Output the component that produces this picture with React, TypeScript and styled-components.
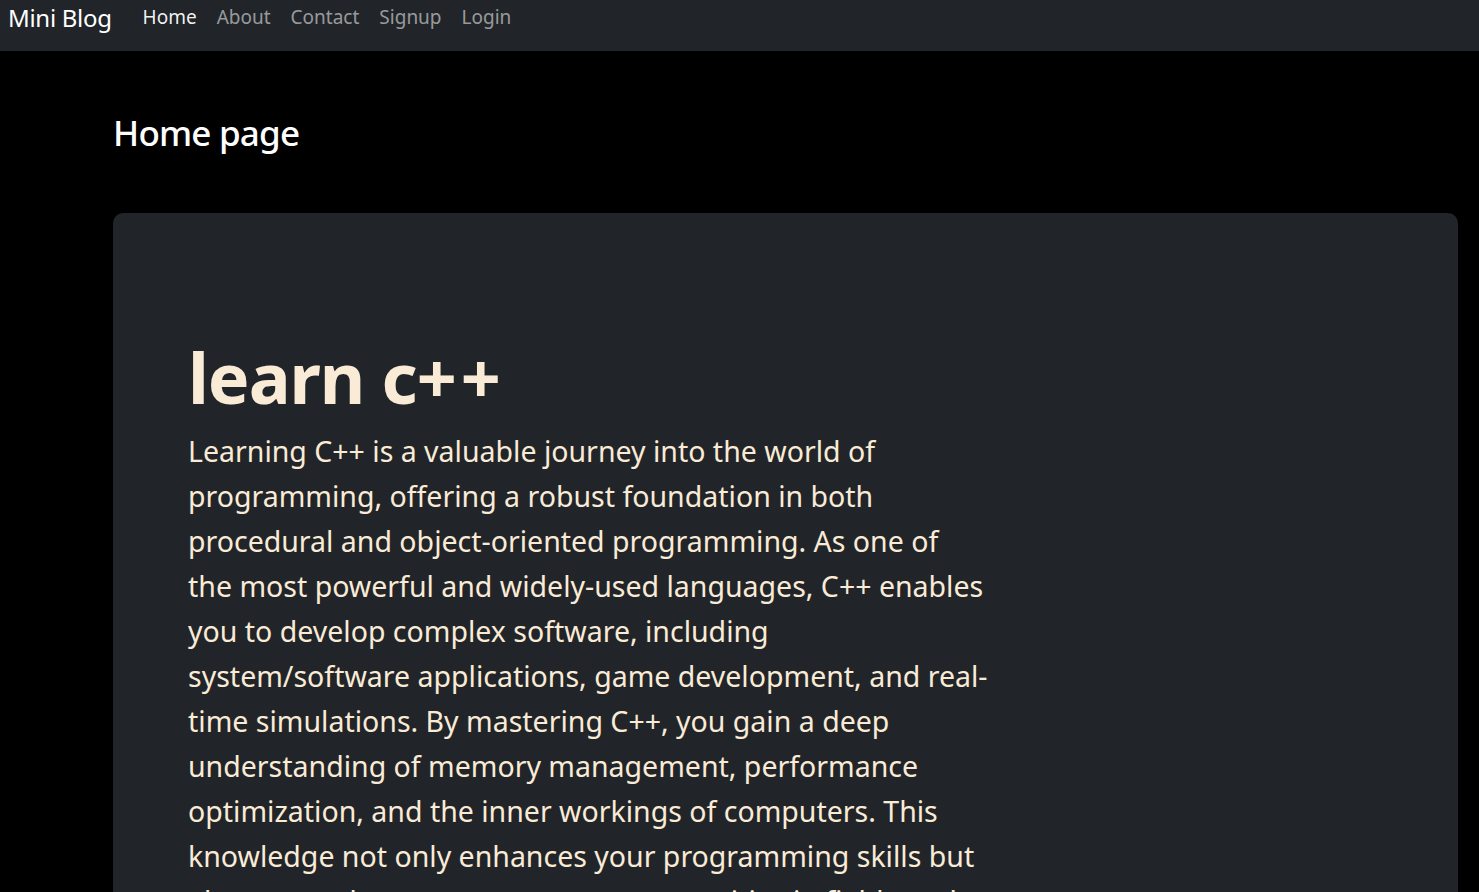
import React from "react";
import styled, { createGlobalStyle } from "styled-components";

const Global = createGlobalStyle`
  html, body { margin: 0; padding: 0; background: #000; }
  body { font-family: "Noto Sans", "Open Sans", sans-serif; overflow: hidden; }
  * { box-sizing: border-box; }
`;

const Navbar = styled.nav`
  height: 51px;
  background: #212529;
  display: flex;
  align-items: flex-start;
  padding: 0 8px;
`;

const Brand = styled.a`
  font-size: 24px;
  line-height: 35px;
  letter-spacing: -0.3px;
  color: #fff;
  text-decoration: none;
  margin-right: 31px;
`;

const NavList = styled.ul`
  display: flex;
  gap: 20px;
  list-style: none;
  margin: 0;
  padding: 0;
`;

const NavLink = styled.a<{ $active?: boolean }>`
  font-size: 19px;
  line-height: 35px;
  color: ${(p) => (p.$active ? "rgba(255,255,255,0.95)" : "rgba(255,255,255,0.55)")};
  text-decoration: none;
`;

const Main = styled.main`
  padding: 0 21px 0 113px;
`;

const PageTitle = styled.h2`
  margin: 0;
  padding-top: 58px;
  font-size: 35px;
  line-height: 48px;
  letter-spacing: -0.8px;
  font-weight: 500;
  color: #fff;
`;

const Hero = styled.section`
  margin-top: 56px;
  background: #212529;
  border-radius: 10px;
  padding: 122px 75px 60px;
`;

const HeroTitle = styled.h1`
  margin: 0 0 10px;
  font-size: 70px;
  line-height: 84px;
  font-weight: 700;
  letter-spacing: -1px;
  color: #faebd7;
`;

const Plus = styled.span`
  letter-spacing: 4px;
`;

const HeroText = styled.p`
  margin: 0;
  max-width: 797px;
  font-size: 28.5px;
  line-height: 45px;
  color: #faebd7;
`;

const Line = styled.span`
  display: block;
  white-space: nowrap;
`;

const links = ["Home", "About", "Contact", "Signup", "Login"];

const paragraph = [
  "Learning C++ is a valuable journey into the world of",
  "programming, offering a robust foundation in both",
  "procedural and object-oriented programming. As one of",
  "the most powerful and widely-used languages, C++ enables",
  "you to develop complex software, including",
  "system/software applications, game development, and real-",
  "time simulations. By mastering C++, you gain a deep",
  "understanding of memory management, performance",
  "optimization, and the inner workings of computers. This",
  "knowledge not only enhances your programming skills but",
  "also opens doors to numerous opportunities in fields such",
  "as game development, embedded systems, and high-",
  "performance computing.",
];

export default function App() {
  return (
    <>
      <Global />
      <Navbar>
        <Brand href="#">Mini Blog</Brand>
        <NavList>
          {links.map((l, i) => (
            <li key={l}>
              <NavLink href="#" $active={i === 0}>
                {l}
              </NavLink>
            </li>
          ))}
        </NavList>
      </Navbar>
      <Main>
        <PageTitle>Home page</PageTitle>
        <Hero>
          <HeroTitle>
            learn c<Plus>+</Plus>+
          </HeroTitle>
          <HeroText>
            {paragraph.map((t, i) => (
              <Line key={i}>{t}</Line>
            ))}
          </HeroText>
        </Hero>
      </Main>
    </>
  );
}
